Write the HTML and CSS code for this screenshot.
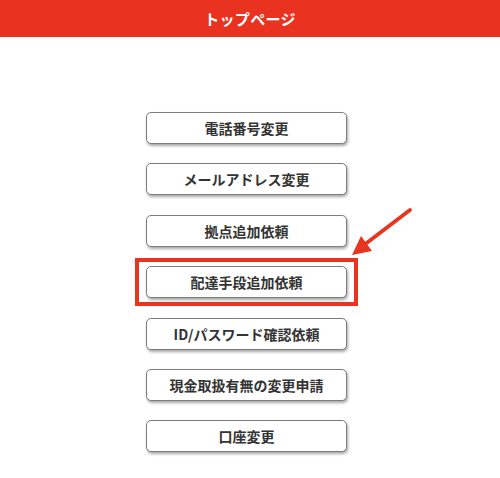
FILE: index.html
```html
<!DOCTYPE html>
<html lang="ja">
<head>
<meta charset="utf-8">
<link rel="stylesheet" href="styles.css">
</head>
<body>
<header class="header">トップページ</header>
<main class="menu">
  <div class="btn">電話番号変更</div>
  <div class="btn">メールアドレス変更</div>
  <div class="btn">拠点追加依頼</div>
  <div class="highlight"><div class="btn">配達手段追加依頼</div></div>
  <div class="btn">ID/パスワード確認依頼</div>
  <div class="btn">現金取扱有無の変更申請</div>
  <div class="btn">口座変更</div>
</main>
<svg class="arrow" width="500" height="478" viewBox="0 0 500 478">
  <line x1="410" y1="210" x2="364" y2="245" stroke="#e9351f" stroke-width="3.8" stroke-linecap="round"/>
  <polygon points="352,255 372,251 361,236" fill="#e9351f"/>
</svg>
</body>
</html>
```
FILE: styles.css
```css
html, body {
  margin: 0;
  padding: 0;
  background: #fff;
}
body {
  width: 500px;
  height: 478px;
  position: relative;
  overflow: hidden;
  font-family: "Noto Sans CJK JP", "Noto Sans", sans-serif;
}
.header {
  height: 37px;
  background: #e9321f;
  color: #fff;
  font-weight: 700;
  font-size: 15px;
  display: flex;
  align-items: center;
  justify-content: center;
  letter-spacing: 0.3px;
}
.menu {
  display: flex;
  flex-direction: column;
  align-items: flex-start;
  padding-left: 146px;
  padding-top: 75px;
  gap: 19.4px;
}
.btn {
  box-sizing: border-box;
  width: 201px;
  height: 32px;
  border: 1px solid #7d7d7d;
  border-radius: 5px;
  background: #fff;
  box-shadow: 1px 2px 3px rgba(0, 0, 0, 0.35);
  color: #333;
  font-weight: 700;
  font-size: 14px;
  display: flex;
  align-items: center;
  justify-content: center;
}
.highlight {
  border: 4px solid #e9351f;
  padding: 4.5px 7px 3.5px 7px;
  margin: -8.5px -11px -7.5px -11px;
}
.arrow {
  position: absolute;
  left: 0;
  top: 0;
  pointer-events: none;
}
```
